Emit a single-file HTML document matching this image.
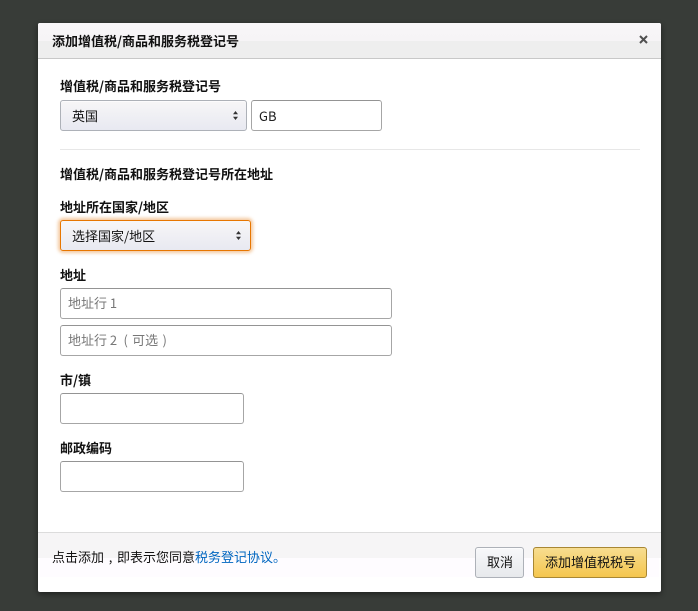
<!DOCTYPE html>
<html lang="zh-CN">
<head>
<meta charset="utf-8">
<style>
html,body{margin:0;padding:0;width:698px;height:611px;overflow:hidden;background:#383c38;}
body{font-family:"WenQuanYi Zen Hei","Noto Sans CJK SC","Liberation Sans",sans-serif;font-size:13px;color:#111;position:relative;}
div{position:absolute;box-sizing:border-box;white-space:nowrap;}
#dlg{left:38px;top:23px;width:623px;height:569px;background:#fff;border-radius:2px;box-shadow:0 2px 6px rgba(0,0,0,.45);overflow:hidden;}
.t{line-height:18px;height:18px;}
.b{font-weight:bold;}
.inp{background:#fff;border:1px solid #a6a6a6;border-top-color:#949494;border-radius:3px;}
.sel{background:linear-gradient(#f7f6f7,#e8e9f1);border:1px solid #adb1b8;border-radius:3px;box-shadow:0 1px 0 rgba(255,255,255,.6) inset;}
.ph{color:#777;}
.c{display:inline-block;width:13px;text-align:center;}
</style>
</head>
<body>
<div id="dlg"></div>

<div style="left:38px;top:23px;width:623px;height:36px;background:linear-gradient(#f8f6f8 0,#f6f4f6 52%,#eeeeee 52%,#eeeeee 100%);border-bottom:1px solid #c8c8c8;border-radius:2px 2px 0 0;"></div>
<div class="t b" style="left:52px;top:32px;">添加增值税/商品和服务税登记号</div>
<svg style="position:absolute;left:639px;top:35px;" width="9" height="9" viewBox="0 0 9 9"><path d="M1 1L8 8M8 1L1 8" stroke="#505050" stroke-width="2" fill="none"/></svg>

<div class="t b" style="left:60px;top:77px;">增值税/商品和服务税登记号</div>
<div class="sel" style="left:60px;top:100px;width:187px;height:31px;"></div>
<div class="t" style="left:72px;top:107px;">英国</div>
<svg style="position:absolute;left:232px;top:110px;" width="7" height="11" viewBox="0 0 7 11"><path d="M3.5 1L6 4.2H1ZM3.5 10L6 6.8H1Z" fill="#333"/></svg>
<div class="inp" style="left:251px;top:100px;width:131px;height:31px;"></div>
<div class="t" style="left:259px;top:107px;color:#222;">GB</div>

<div style="left:60px;top:149px;width:580px;height:1px;background:#e7e7e7;"></div>

<div class="t b" style="left:60px;top:165px;">增值税/商品和服务税登记号所在地址</div>
<div class="t b" style="left:60px;top:198px;">地址所在国家/地区</div>
<div class="sel" style="left:60px;top:220px;width:191px;height:31px;border:1px solid #e77600;box-shadow:0 0 3px 2px rgba(228,121,17,.4);"></div>
<div class="t" style="left:72px;top:227px;">选择国家/地区</div>
<svg style="position:absolute;left:235px;top:230px;" width="7" height="11" viewBox="0 0 7 11"><path d="M3.5 1L6 4.2H1ZM3.5 10L6 6.8H1Z" fill="#333"/></svg>

<div class="t b" style="left:60px;top:266px;">地址</div>
<div class="inp" style="left:60px;top:288px;width:332px;height:31px;"></div>
<div class="t ph" style="left:68px;top:294px;">地址行 1</div>
<div class="inp" style="left:60px;top:325px;width:332px;height:31px;"></div>
<div class="t ph" style="left:68px;top:331px;">地址行 2<span class="c" style="margin-left:2px;">(</span>可选<span class="c">)</span></div>

<div class="t b" style="left:60px;top:371px;">市/镇</div>
<div class="inp" style="left:60px;top:393px;width:184px;height:31px;"></div>
<div class="t b" style="left:60px;top:439px;">邮政编码</div>
<div class="inp" style="left:60px;top:461px;width:184px;height:31px;"></div>

<div style="left:38px;top:532px;width:623px;height:26px;background:#f6f5f6;border-top:1px solid #dcdcdc;"></div>
<div style="left:40px;top:558px;width:619px;height:19px;background:#fefcff;"></div>
<div class="t" style="left:52px;top:548px;">点击添加<span class="c">,</span>即表示您同意<span style="color:#0066c0;">税务登记协议。</span></div>

<div class="sel" style="left:475px;top:547px;width:49px;height:31px;background:linear-gradient(#f7f8fa,#e7e9ec);border-color:#adb1b8;"></div>
<div class="t" style="left:487px;top:553px;">取消</div>
<div style="left:533px;top:547px;width:114px;height:31px;background:linear-gradient(#f7dd90,#f5c64e);border:1px solid #a88734;border-radius:3px;"></div>
<div class="t" style="left:545px;top:553px;">添加增值税税号</div>
</body>
</html>
